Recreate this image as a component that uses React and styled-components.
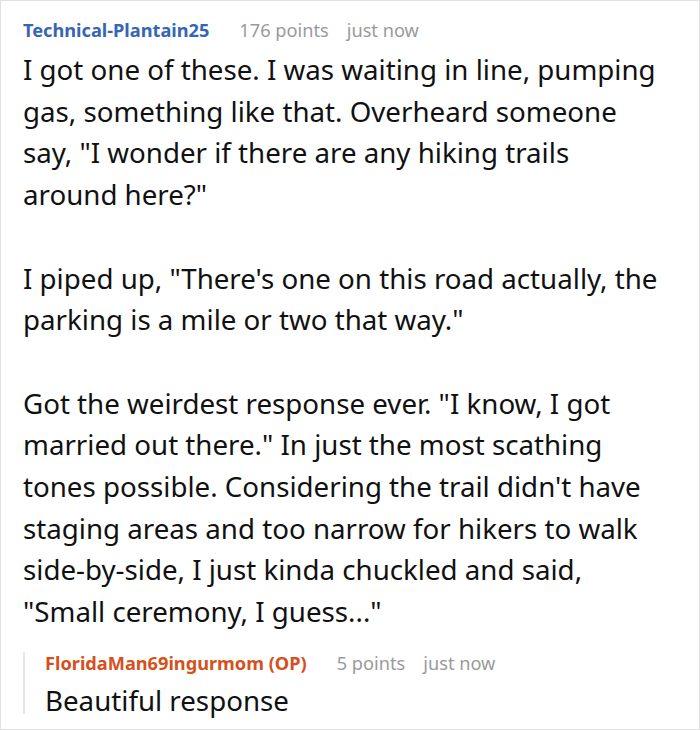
import styled, { createGlobalStyle } from 'styled-components';

const GlobalStyle = createGlobalStyle`
  html, body {
    margin: 0;
    padding: 0;
    background: #ffffff;
  }
  body {
    font-family: "Noto Sans", "Open Sans", sans-serif;
  }
`;

const comment = {
  author: 'Technical-Plantain25',
  points: 176,
  time: 'just now',
  paragraphs: [
    'I got one of these. I was waiting in line, pumping gas, something like that. Overheard someone say, "I wonder if there are any hiking trails around here?"',
    'I piped up, "There\'s one on this road actually, the parking is a mile or two that way."',
    'Got the weirdest response ever. "I know, I got married out there." In just the most scathing tones possible. Considering the trail didn\'t have staging areas and too narrow for hikers to walk side-by-side, I just kinda chuckled and said, "Small ceremony, I guess..."',
  ],
  reply: {
    author: 'FloridaMan69ingurmom (OP)',
    points: 5,
    time: 'just now',
    text: 'Beautiful response',
  },
};

const App = () => {
  const { reply } = comment;
  return (
    <>
      <GlobalStyle />
      <Card>
        <Header>
          <Author>{comment.author}</Author>
          <Meta>{comment.points} points</Meta>
          <Meta>{comment.time}</Meta>
        </Header>
        <Body>
          {comment.paragraphs.map((text, i) => (
            <p key={i}>{text}</p>
          ))}
        </Body>

        <Reply>
          <Header $compact>
            <Author $op>{reply.author}</Author>
            <Meta>{reply.points} points</Meta>
            <Meta>{reply.time}</Meta>
          </Header>
          <Body $compact>
            <p>{reply.text}</p>
          </Body>
        </Reply>
      </Card>
    </>
  );
};

const Card = styled.section`
  box-sizing: border-box;
  width: 700px;
  height: 730px;
  padding: 15px 34px 0 22px;
  border: 1px solid #e1e1e1;
  overflow: hidden;
`;

const Header = styled.div`
  display: flex;
  align-items: baseline;
  gap: 18px;
  font-size: 18.2px;
  line-height: ${(props) => (props.$compact ? '22px' : '28px')};
  margin-top: ${(props) => (props.$compact ? '-8px' : '0')};
`;

const Author = styled.span`
  font-weight: 700;
  margin-right: 12px;
  color: ${(props) => (props.$op ? '#d5501b' : '#3566b6')};
`;

const Meta = styled.span`
  color: #9a9a9a;
`;

const Body = styled.div`
  font-size: 27.7px;
  line-height: ${(props) => (props.$compact ? '28px' : '41.7px')};
  margin-top: ${(props) => (props.$compact ? '12px' : '5px')};
  color: #111111;

  p {
    margin: 0 0 41.7px;
  }
  p:last-child {
    margin-bottom: 0;
  }
`;

const Reply = styled.div`
  margin-top: 27px;
  padding-left: 20px;
  border-left: 2px solid #e6e6e6;
`;

export default App;
